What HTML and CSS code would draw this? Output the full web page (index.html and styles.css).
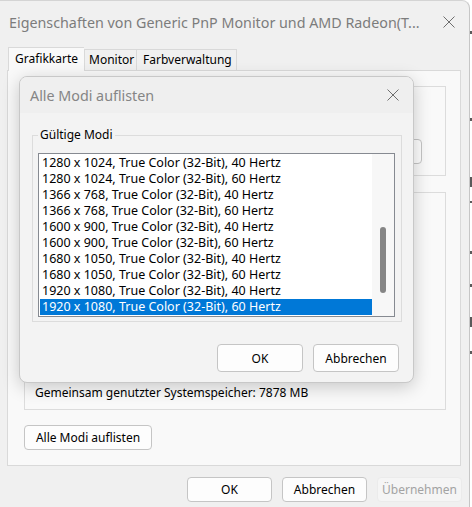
FILE: index.html
```html
<!DOCTYPE html>
<html lang="de">
<head>
<meta charset="utf-8">
<title>Eigenschaften</title>
<link rel="stylesheet" href="styles.css">
</head>
<body>
<div class="window">
  <div class="titlebar">
    <span class="title">Eigenschaften von Generic PnP Monitor und AMD Radeon(T...</span>
    <svg class="close" width="12" height="12" viewBox="0 0 12 12"><path d="M0.5 0.5 L11.5 11.5 M11.5 0.5 L0.5 11.5" stroke="#6e6e6e" stroke-width="1" fill="none"/></svg>
  </div>
  <div class="tabs">
    <div class="tab tab-active tab-graf">Grafikkarte</div>
    <div class="tab tab-mon">Monitor</div>
    <div class="tab tab-farb">Farbverwaltung</div>
  </div>
  <div class="panel">
    <div class="group group-adapter">
      <div class="btn btn-hidden">Eigenschaften</div>
    </div>
    <div class="group group-memory">
      <div class="mem-text">Gemeinsam genutzter Systemspeicher: 7878 MB</div>
    </div>
    <div class="btn btn-list">Alle Modi auflisten</div>
  </div>
  <div class="footer">
    <div class="btn btn-foot">OK</div>
    <div class="btn btn-foot">Abbrechen</div>
    <div class="btn btn-foot btn-disabled">Übernehmen</div>
  </div>

  <div class="modal">
    <div class="modal-title">
      <span class="modal-title-text">Alle Modi auflisten</span>
      <svg class="modal-close" width="12" height="12" viewBox="0 0 12 12"><path d="M0.5 0.5 L11.5 11.5 M11.5 0.5 L0.5 11.5" stroke="#6e6e6e" stroke-width="1" fill="none"/></svg>
    </div>
    <div class="modal-body">
      <fieldset class="modes">
        <legend>Gültige Modi</legend>
        <div class="listbox">
          <div class="list">
            <div class="item">1280 x 1024, True Color (32-Bit), 40 Hertz</div>
            <div class="item">1280 x 1024, True Color (32-Bit), 60 Hertz</div>
            <div class="item">1366 x 768, True Color (32-Bit), 40 Hertz</div>
            <div class="item">1366 x 768, True Color (32-Bit), 60 Hertz</div>
            <div class="item">1600 x 900, True Color (32-Bit), 40 Hertz</div>
            <div class="item">1600 x 900, True Color (32-Bit), 60 Hertz</div>
            <div class="item">1680 x 1050, True Color (32-Bit), 40 Hertz</div>
            <div class="item">1680 x 1050, True Color (32-Bit), 60 Hertz</div>
            <div class="item">1920 x 1080, True Color (32-Bit), 40 Hertz</div>
            <div class="item item-selected">1920 x 1080, True Color (32-Bit), 60 Hertz</div>
          </div>
          <div class="scrollbar"><div class="thumb"></div></div>
        </div>
      </fieldset>
      <div class="modal-buttons">
        <div class="btn btn-modal">OK</div>
        <div class="btn btn-modal">Abbrechen</div>
      </div>
    </div>
  </div>
</div>
<div class="strip">
  <div class="mark m1"></div>
  <div class="mark m2"></div>
  <div class="mark m3"></div>
  <div class="mark m4"></div>
  <div class="mark m5"></div>
  <div class="mark m6"></div>
  <div class="mark m7"></div>
  <div class="mark m8"></div>
</div>
</body>
</html>
```

FILE: styles.css
```css
* { box-sizing: border-box; }

html, body {
  margin: 0;
  padding: 0;
}

body {
  width: 472px;
  height: 507px;
  overflow: hidden;
  background: #ffffff;
  display: flex;
  font-family: "Noto Sans", "Open Sans", sans-serif;
  font-size: 12px;
  color: #000;
}

.window {
  position: relative;
  width: 470px;
  height: 520px;
  flex: none;
  background: #f0f0f0;
  border-top: 1px solid #d4d4d4;
  border-right: 1px solid #c6c6c6;
  border-top-right-radius: 8px;
}

.titlebar {
  height: 42px;
  display: flex;
  align-items: center;
  padding-left: 9px;
}

.title {
  font-size: 14.3px;
  color: #7c7c7c;
  white-space: nowrap;
}

.close {
  margin-left: auto;
  margin-right: 14px;
  width: 12px;
  height: 12px;
}

.tabs {
  margin-top: 4px;
  height: 23px;
  padding-left: 8px;
  display: flex;
  align-items: flex-end;
  position: relative;
  z-index: 1;
}

.tab {
  height: 21px;
  line-height: 20px;
  border: 1px solid #d9d9d9;
  border-bottom: none;
  background: #f0f0f0;
  white-space: nowrap;
}

.tab-active {
  height: 24px;
  margin-bottom: -1px;
  background: #f9f9f9;
  line-height: 22px;
  border-right: none;
}

.tab-graf { width: 76px; padding-left: 6px; }
.tab-mon { width: 53px; padding-left: 4px; }
.tab-farb { width: 100px; padding-left: 6px; border-left: none; }

.panel {
  margin-left: 7px;
  width: 454px;
  height: 396px;
  background: #f9f9f9;
  border: 1px solid #d9d9d9;
  padding: 15px 0 0 16px;
}

.group {
  width: 422px;
  border: 1px solid #dcdcdc;
}

.group-adapter {
  height: 90px;
  padding: 52px 23px 0 0;
  display: flex;
  justify-content: flex-end;
}

.group-memory {
  margin-top: 16px;
  height: 218px;
  display: flex;
  flex-direction: column;
  justify-content: flex-end;
  padding: 0 0 8px 10px;
}

.mem-text {
  line-height: 16px;
}

.btn {
  height: 25px;
  border: 1px solid #c5c5c5;
  border-radius: 4px;
  background: #fdfdfd;
  display: flex;
  align-items: center;
  justify-content: center;
  white-space: nowrap;
}

.btn-hidden {
  width: 100px;
}

.btn-list {
  margin-top: 15px;
  width: 128px;
}

.footer {
  margin-top: 11px;
  display: flex;
  justify-content: flex-end;
  gap: 10px;
  padding-right: 7px;
}

.btn-foot {
  width: 85px;
}

.btn-disabled {
  background: #f5f5f5;
  border-color: #ebebeb;
  color: #a3a3a3;
}

/* Modal dialog overlaying the property sheet */
.modal {
  position: absolute;
  left: 19px;
  top: 75px;
  width: 395px;
  height: 307px;
  border: 1px solid #c8c8c8;
  border-radius: 8px;
  background: #f3f3f3;
  box-shadow: 0 4px 18px rgba(0, 0, 0, 0.2);
  overflow: hidden;
  z-index: 2;
}

.modal-title {
  height: 36px;
  display: flex;
  align-items: center;
  padding-left: 10px;
  background: #efefef;
}

.modal-title-text {
  font-size: 14.3px;
  color: #858585;
}

.modal-close {
  margin-left: auto;
  margin-right: 14px;
}

.modal-body {
  padding: 14px 11px 0 12px;
}

.modes {
  margin: 0;
  padding: 0 6px 4px 5px;
  border: 1px solid #dcdcdc;
  min-width: 0;
}

.modes legend {
  padding: 0 2px;
  line-height: 16px;
}

.listbox {
  margin-top: 10px;
  height: 164px;
  border: 1px solid #868a91;
  background: #ffffff;
  display: flex;
}

.list {
  flex: 1;
  padding: 1px 0 0 1px;
}

.item {
  height: 16px;
  line-height: 16px;
  padding-left: 2px;
  font-size: 12.5px;
  white-space: nowrap;
}

.item-selected {
  background: #0078d7;
  color: #ffffff;
}

.scrollbar {
  width: 22px;
  flex: none;
  background: #f7f7f7;
  padding: 73px 0 0 8px;
}

.thumb {
  width: 6px;
  height: 66px;
  border-radius: 3px;
  background: #858585;
}

.modal-buttons {
  margin-top: 22px;
  display: flex;
  justify-content: flex-end;
  gap: 10px;
  padding-right: 3px;
}

.btn-modal {
  width: 86px;
  height: 28px;
}

/* Sliver of the desktop to the right of the window */
.strip {
  flex: 1;
  background: #ffffff;
  display: flex;
  flex-direction: column;
  align-items: flex-start;
}

.mark {
  width: 2px;
  background: #5a5a5a;
}

.m1 { margin-top: 31px; height: 3px; }
.m2 { margin-top: 84px; height: 3px; }
.m3 { margin-top: 56px; height: 10px; }
.m4 { margin-top: 14px; height: 2px; }
.m5 { margin-top: 48px; height: 3px; }
.m6 { margin-top: 30px; height: 3px; }
.m7 { margin-top: 30px; height: 10px; }
.m8 { margin-top: 24px; height: 3px; }
```
